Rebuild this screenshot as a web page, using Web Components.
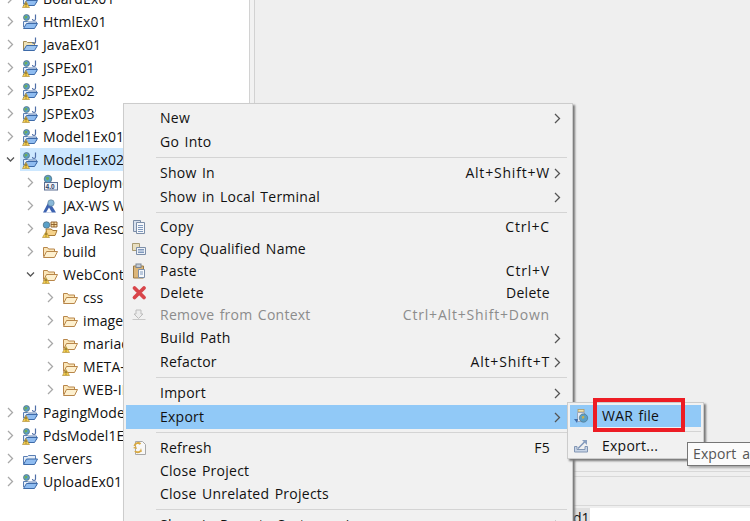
<!DOCTYPE html>
<html><head><meta charset="utf-8"><style>
html,body{margin:0;padding:0;width:750px;height:521px;overflow:hidden;background:#f0f0f0}
</style></head><body>
<ide-app></ide-app>
<script>
const FONT='"Open Sans","Noto Sans",sans-serif';
const sv=(s,w=16,h=16)=>`<svg width="${w}" height="${h}" viewBox="0 0 16 16" style="display:block;flex:none;overflow:visible">${s}</svg>`;
const openFolder=`<path d="M1.500 12.500V3.500h4l1 1.500h6v2" fill="#fbe6b8" stroke="#b8864a"/><path d="M1.500 13.500l3-6h11l-3 6z" fill="#fdf0cf" stroke="#b8864a" stroke-linejoin="round"/>`;
const blueFolder=`<path d="M1.500 13V5.500h4l1-1h7v8" fill="#e6eef8" stroke="#5a7fb5"/><path d="M1.500 13.500l3-5.500h11l-3 5.500z" fill="#8fbcf0" stroke="#3d6aa8"/>`;
const globe=`<circle cx="4.500" cy="3.500" r="3" fill="#5aa0c8" stroke="#4d6a7a" stroke-width=".7"/><path d="M2.800 2.200l2.200-.5.500 1.800-1.800 1.300-1.200-.8z" fill="#6fae55"/>`;
const jmark=`<path d="M13.500 .5v4.500q0 1.500-1.500 1.500T10.500 5" fill="none" stroke="#4f6fa8" stroke-width="1.200"/>`;
const warn=`<path d="M4 10.500L7.500 16.500H.5z" fill="#f6cf4f" stroke="#a8852a" stroke-width=".6"/><path d="M4 12.200v2M4 14.800v.7" stroke="#3a2a10" stroke-width=".9"/>`;
const projBase=`<path d="M1.500 13V7.500h4l1 .5h8v4" fill="#e6eef8" stroke="#5a7fb5"/><path d="M1.500 14.500l3-5h11l-3 5z" fill="#8fbcf0" stroke="#3d6aa8"/>`;
const icons={
 proj:sv(projBase+globe+jmark),
 projw:sv(projBase+globe+jmark+warn),
 jproj:sv(`<path d="M1.500 13V4.500h3l1 1h7v3" fill="#efe2b8" stroke="#a08a55"/><path d="M1.500 13.500l3-5h11l-3 5z" fill="#9cc4f0" stroke="#3d6aa8"/>`+jmark),
 servers:sv(blueFolder),
 dd:sv(`<circle cx="6" cy="4" r="3.800" fill="#5aa0c8" stroke="#4d6a7a" stroke-width=".7"/><path d="M3.500 2.500l3-.8.700 2.300-2.200 1.500z" fill="#6fae55"/><rect x="2.500" y="7.500" width="13" height="7.500" fill="#eef2f8" stroke="#5c6f92"/><text x="3.500" y="13.800" font-family="Liberation Sans" font-size="6.500" font-weight="700" fill="#2f3f66">4.0</text>`),
 jax:sv(`<path d="M1 14.500L7 3l7 11.500z" fill="#3d62b0"/><path d="M4 14.500l3-5 3 5z" fill="#fff"/><circle cx="9" cy="5" r="3.200" fill="#8ab8d8" stroke="#5a7a92" stroke-width=".6"/>`),
 jres:sv(`<circle cx="4.500" cy="4" r="3.300" fill="#5aa0c8" stroke="#4d6a7a" stroke-width=".7"/><path d="M4 8h5l2 1.500h4l-2 5H5z" fill="#f5d28a" stroke="#a87a35"/><path d="M9 1h6v5H9zM12 1v5M9 3.500h6" fill="#fbe0a8" stroke="#8a5a25" stroke-width=".9"/>`+warn),
 folder:sv(openFolder),
 folderw:sv(openFolder+warn),
 copy:sv(`<path d="M1.500 1.500h7v11h-7z" fill="#d9e2ee" stroke="#7c8ea8"/><path d="M4.500 3.500h8v11h-8z" fill="#f6f8fb" stroke="#7c8ea8"/><path d="M6 6.500h5M6 8.500h5M6 10.500h5M6 12.500h5" stroke="#7f99bd"/>`),
 copyq:sv(`<path d="M.5 2.500h7v7h-7z" fill="#e9dfc0" stroke="#a99b72"/><path d="M4.500 6.500h9v7h-9z" fill="#eef2f8" stroke="#7c8ea8"/><path d="M6 8.500h6M6 10h6M6 11.500h6" stroke="#7f99bd"/>`),
 paste:sv(`<path d="M1.500 3h10v12h-10z" fill="#dcb67a" stroke="#9a7a45"/><rect x="4" y="1" width="5" height="3.500" fill="#c4ccd6" stroke="#7c8590"/><path d="M6.500 6.500h6v8h-6z" fill="#f7f9fc" stroke="#7c8ea8"/><path d="M8 9h3M8 11h3" stroke="#7f99bd"/>`),
 del:sv(`<path d="M2.500 3l9.500 9.500M12 3L2.500 12.500" stroke="#d8454a" stroke-width="3.800" stroke-linecap="round"/>`),
 rem:sv(`<path d="M.5 12.500h13" stroke="#c8c8c8"/><path d="M4 3h5v4h2l-4.500 4.500L2 7h2z" fill="#ececec" stroke="#bdbdbd"/>`),
 refresh:sv(`<path d="M3.500 1.500h7l3 3v10h-10z" fill="#f8f8f8" stroke="#a8a8a8"/><path d="M2.500 6a3.500 3.500 0 0 1 6-2M8.500 11a3.500 3.500 0 0 1-5.500 0" fill="none" stroke="#d8a840" stroke-width="2"/><path d="M1 8l3-2 1 3zM9 8l-1 3 2 1z" fill="#d8a840"/>`),
 war:sv(`<rect x="5" y="1.500" width="6" height="2.500" fill="#f3e3b0" stroke="#b09a60" stroke-width=".8"/><path d="M4.500 4.500h7v9h-7z" fill="#e4ecf6" stroke="#9aa8bc"/><circle cx="10.500" cy="10" r="4.200" fill="#5aa0c8" stroke="#4d6a7a" stroke-width=".6"/><path d="M8.500 8.500l2.500-.8.500 2-2 1.200z" fill="#c9b04f"/><path d="M1 11h4l-1 4z" fill="#3d6aa8"/>`),
 exp:sv(`<path d="M1.500 8.500v5.500h13V8.500h-2.500v3h-8v-3z" fill="#c7d4e6" stroke="#8296b4"/><path d="M5 10.500L12 3.500" stroke="#7f96b8" stroke-width="1.500"/><path d="M9 2h5v5z" fill="#8aa0c0"/>`)
};
const chev=(open,c)=>open
 ?`<svg width="9" height="9" viewBox="0 0 9 9" style="display:block;margin-left:-1px"><path d="M1 2.500l3.500 3.500L8 2.500" fill="none" stroke="${c||'#555'}" stroke-width="1.300"/></svg>`
 :`<svg width="9" height="11" viewBox="0 0 9 11" style="display:block"><path d="M2 1l4.500 4.500L2 10" fill="none" stroke="${c||'#a8a8a8'}" stroke-width="1.300"/></svg>`;

class TreeRow extends HTMLElement{
 constructor(){super();this.attachShadow({mode:'open'})}
 connectedCallback(){
  const d=+this.getAttribute('depth')||0,open=this.hasAttribute('open'),sel=this.hasAttribute('selected');
  this.shadowRoot.innerHTML=`<style>
  :host{display:flex;align-items:center;height:23px;white-space:nowrap;box-sizing:border-box;padding-left:${6+d*20}px;color:#111;font:14px ${FONT};letter-spacing:.1px}
  .c{width:9px;height:11px;display:flex;align-items:center;justify-content:center;margin-right:5px;flex:none}
  .r{display:flex;align-items:center;gap:5px;height:23px;padding-right:60px;padding-left:2px;${sel?'background:#cde8ff;':''}}
  </style><span class="c">${chev(open)}</span><span class="r">${icons[this.getAttribute('icon')]||''}<slot></slot></span>`;
 }
}
customElements.define('tree-row',TreeRow);

class MenuItem extends HTMLElement{
 constructor(){super();this.attachShadow({mode:'open'})}
 connectedCallback(){
  const h=this.getAttribute('h')||23,k=this.getAttribute('key')||'',sub=this.hasAttribute('sub'),ic=this.getAttribute('icon');
  const dis=this.hasAttribute('disabled');
  const ks=k.includes('+')?'.8px':'.3px';
  this.shadowRoot.innerHTML=`<style>
  :host{display:flex;align-items:center;height:${h}px;color:${dis?'#8c8c8c':'#111'};font:14px ${FONT};letter-spacing:.25px;word-spacing:1.5px;white-space:nowrap}
  :host([active]){background:#91c9f7}
  .i{width:var(--iw,34px);padding-left:var(--ip,6px);box-sizing:border-box;flex:none}
  .t{flex:1;position:relative;top:-1px}
  .k{letter-spacing:${ks};position:relative;top:-1px}
  .a{width:var(--aw,17px);flex:none;padding-left:3px;box-sizing:border-box}
  </style><span class="i">${icons[ic]||''}</span><span class="t"><slot></slot></span><span class="k">${k}</span><span class="a">${sub?chev(false,'#555'):''}</span>`;
 }
}
customElements.define('menu-item',MenuItem);

class MenuSep extends HTMLElement{
 constructor(){super();this.attachShadow({mode:'open'}).innerHTML=`<style>:host{display:block;height:1px;margin:var(--sm,3px 0 3px 30px);background:#d4d4d4}</style>`}
}
customElements.define('menu-sep',MenuSep);

class PopMenu extends HTMLElement{
 constructor(){super();this.attachShadow({mode:'open'}).innerHTML=`<style>
 :host{display:block;position:absolute;box-sizing:border-box;background:#f1f1f1;border:1px solid #ccc;box-shadow:2px 2px 2px #777}
 </style><slot></slot>`}
}
customElements.define('pop-menu',PopMenu);

class IdeApp extends HTMLElement{
 constructor(){super();this.attachShadow({mode:'open'}).innerHTML=`<style>
 :host{display:flex;width:750px;height:521px;overflow:hidden;position:relative;background:#efefef;font:14px ${FONT}}
 .left{width:250px;height:521px;box-sizing:border-box;background:#fff;border-right:1px solid #d2d2d2;overflow:hidden;flex:none}
 .tree{margin-top:-13px}
 .sash{width:4px;flex:none;background:#f2f2f2}
 .right{flex:1;display:flex;flex-direction:column;border-left:1px solid #d2d2d2}
 .top{height:471px;flex:none;border-bottom:1px solid #d8d8d8}
 .gap{height:4px;flex:none;border-bottom:1px solid #d8d8d8}
 .mid{height:28px;flex:none;border-bottom:1px solid #d8d8d8}
 .bot{flex:1;display:flex;padding-left:318px;padding-top:2px}
 .tab{width:17px;background:#e0e0e0;color:#111;overflow:hidden;line-height:19px;box-sizing:border-box;white-space:nowrap}
 .white{flex:1;background:#fff}
 #m{left:123px;top:103px;width:450px;height:430px;padding:2px 5px 0 2px}
 #s{left:567px;top:402px;width:137px;height:57px;padding:2px;--iw:32px;--ip:3px;--aw:0px}
 .tip{position:absolute;left:687px;top:442px;width:90px;height:24px;background:#fbfbfb;border:1px solid #767676;box-shadow:2px 2px 2px #aaa;color:#555;padding-left:5px;line-height:21px;white-space:nowrap;box-sizing:border-box;letter-spacing:.1px;word-spacing:2px}
 .box{position:absolute;left:593px;top:398px;width:92px;height:34px;border:4px solid #ed1c24;box-sizing:border-box}
 </style>
 <div class="left"><div class="tree">
 <tree-row icon="projw">BoardEx01</tree-row>
 <tree-row icon="proj">HtmlEx01</tree-row>
 <tree-row icon="jproj">JavaEx01</tree-row>
 <tree-row icon="projw">JSPEx01</tree-row>
 <tree-row icon="projw">JSPEx02</tree-row>
 <tree-row icon="projw">JSPEx03</tree-row>
 <tree-row icon="projw">Model1Ex01</tree-row>
 <tree-row icon="projw" open selected>Model1Ex02</tree-row>
 <tree-row icon="dd" depth="1">Deployment Descriptor</tree-row>
 <tree-row icon="jax" depth="1">JAX-WS Web Services</tree-row>
 <tree-row icon="jres" depth="1">Java Resources</tree-row>
 <tree-row icon="folder" depth="1">build</tree-row>
 <tree-row icon="folderw" depth="1" open>WebContent</tree-row>
 <tree-row icon="folder" depth="2">css</tree-row>
 <tree-row icon="folder" depth="2">images</tree-row>
 <tree-row icon="folderw" depth="2">mariadb</tree-row>
 <tree-row icon="folderw" depth="2">META-INF</tree-row>
 <tree-row icon="folder" depth="2">WEB-INF</tree-row>
 <tree-row icon="projw">PagingModel1</tree-row>
 <tree-row icon="projw">PdsModel1Ex01</tree-row>
 <tree-row icon="servers">Servers</tree-row>
 <tree-row icon="proj">UploadEx01</tree-row>
 </div></div>
 <div class="sash"></div>
 <div class="right"><div class="top"></div><div class="gap"></div><div class="mid"></div><div class="bot"><div class="tab">d1</div><div class="white"></div></div></div>
 <pop-menu id="m">
  <menu-item sub h="24">New</menu-item>
  <menu-item h="24">Go Into</menu-item>
  <menu-sep></menu-sep>
  <menu-item sub key="Alt+Shift+W" h="24">Show In</menu-item>
  <menu-item sub h="24">Show in Local Terminal</menu-item>
  <menu-sep></menu-sep>
  <menu-item icon="copy" key="Ctrl+C" h="22">Copy</menu-item>
  <menu-item icon="copyq" h="22">Copy Qualified Name</menu-item>
  <menu-item icon="paste" key="Ctrl+V" h="22">Paste</menu-item>
  <menu-item icon="del" key="Delete" h="22">Delete</menu-item>
  <menu-item icon="rem" key="Ctrl+Alt+Shift+Down" disabled h="22">Remove from Context</menu-item>
  <menu-item sub h="24">Build Path</menu-item>
  <menu-item sub key="Alt+Shift+T" h="24">Refactor</menu-item>
  <menu-sep></menu-sep>
  <menu-item sub h="24">Import</menu-item>
  <menu-item sub active h="24">Export</menu-item>
  <menu-sep></menu-sep>
  <menu-item icon="refresh" key="F5" h="24">Refresh</menu-item>
  <menu-item h="23">Close Project</menu-item>
  <menu-item h="23">Close Unrelated Projects</menu-item>
  <menu-sep></menu-sep>
  <menu-item sub h="24">Show in Remote Systems view</menu-item>
 </pop-menu>
 <pop-menu id="s">
  <menu-item icon="war" active h="22">WAR file</menu-item>
  <menu-sep style="--sm:4px 0 3px 29px"></menu-sep>
  <menu-item icon="exp" h="22">Export...</menu-item>
 </pop-menu>
 <div class="tip">Export a</div>
 <div class="box"></div>`}
}
customElements.define('ide-app',IdeApp);
</script>
</body></html>
